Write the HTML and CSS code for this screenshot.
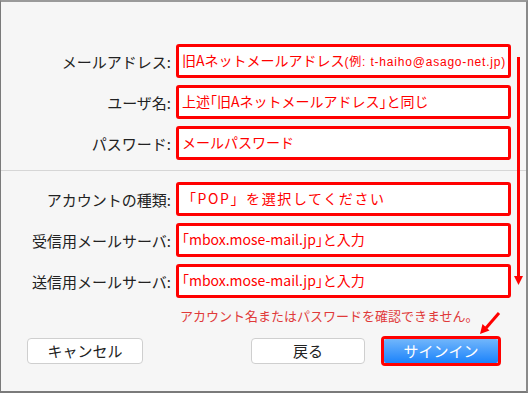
FILE: index.html
```html
<!DOCTYPE html>
<html lang="ja">
<head>
	<meta charset="UTF-8">
	<title>アカウント設定</title>
	<link rel="stylesheet" href="styles.css">
</head>
<body>
	<div class="window">
		<div class="group first">
			<div class="row">
				<div class="label">メールアドレス:</div>
				<div class="field">旧Aネットメールアドレス<span class="small">(例: t-haiho@asago-net.jp)</span></div>
			</div>
			<div class="row">
				<div class="label">ユーザ名:</div>
				<div class="field half">上述「旧Aネットメールアドレス」と同じ</div>
			</div>
			<div class="row">
				<div class="label">パスワード:</div>
				<div class="field">メールパスワード</div>
			</div>
		</div>
		<div class="sep"></div>
		<div class="group">
			<div class="row">
				<div class="label">アカウントの種類:</div>
				<div class="field wide">「POP」を選択してください</div>
			</div>
			<div class="row">
				<div class="label">受信用メールサーバ:</div>
				<div class="field half">「mbox.mose-mail.jp」と入力</div>
			</div>
			<div class="row">
				<div class="label">送信用メールサーバ:</div>
				<div class="field half">「mbox.mose-mail.jp」と入力</div>
			</div>
		</div>
		<div class="error">アカウント名またはパスワードを確認できません。</div>
		<div class="buttons">
			<div class="btn cancel">キャンセル</div>
			<div class="right">
				<div class="btn back">戻る</div>
				<div class="signin-frame"><div class="btn signin">サインイン</div></div>
			</div>
		</div>

		<!-- 赤い矢印 -->
		<svg class="arrows" width="528" height="393" viewBox="0 0 528 393">
			<line x1="518.5" y1="57" x2="518.5" y2="278" stroke="#f00" stroke-width="3"/>
			<polygon points="514,276 523,276 518.5,285" fill="#f00"/>
			<line x1="499" y1="313" x2="486" y2="328" stroke="#f00" stroke-width="3"/>
			<polygon points="480,334 489.5,330.5 482.5,324" fill="#f00"/>
		</svg>
	</div>
</body>
</html>
```

FILE: styles.css
```css
*{
	margin: 0;
	padding: 0;
	box-sizing: border-box;
}
body{
	font-family: "Noto Sans CJK JP", "Noto Sans", sans-serif;
}
.window{
	position: relative;
	width: 528px;
	height: 393px;
	background-color: #f6f6f6;
	border-top: 2px solid #9a9a9a;
	border-right: 2px solid #8a8a8a;
	border-bottom: 2px solid #7a7a7a;
	border-left: 1px solid #7a7a7a;
}
.group{
	display: flex;
	flex-direction: column;
	gap: 7px;
}
.group.first{
	padding-top: 42px;
}
.row{
	display: flex;
	align-items: center;
	gap: 5px;
	height: 34px;
}
.label{
	width: 170px;
	text-align: right;
	font-size: 15px;
	color: #222;
}
.field{
	width: 335px;
	height: 34px;
	border: 3px solid #f00;
	border-radius: 3px;
	background-color: #fff;
	padding-left: 3px;
	font-size: 14px;
	line-height: 27px;
	color: #f00;
	white-space: nowrap;
	overflow: hidden;
}
.field.half{
	font-feature-settings: "halt";
}
.field.wide{
	letter-spacing: 1.6px;
}
.small{
	font-size: 12px;
	font-family: "Liberation Sans", "Noto Sans CJK JP", sans-serif;
	letter-spacing: 0.8px;
}
.sep{
	height: 1px;
	background-color: #d6d6d6;
	margin: 10px 0 11px;
}
.error{
	margin-top: 10px;
	padding-left: 179px;
	font-size: 13px;
	line-height: 16px;
	color: #e03a3a;
}
.buttons{
	display: flex;
	justify-content: space-between;
	align-items: center;
	margin-top: 12px;
	padding: 0 25px 0 26px;
}
.right{
	display: flex;
	align-items: center;
	gap: 16px;
}
.btn{
	height: 26px;
	line-height: 24px;
	text-align: center;
	font-size: 15px;
	color: #222;
	background-color: #fff;
	border: 1px solid #cfcfcf;
	border-radius: 4px;
}
.cancel{
	width: 116px;
}
.back{
	width: 114px;
}
.signin-frame{
	border: 3px solid #f00;
	border-radius: 4px;
}
.signin{
	width: 114px;
	height: 24px;
	line-height: 24px;
	border: none;
	border-radius: 2px;
	color: #fff;
	background: linear-gradient(#71b6fb, #1c83fb);
}
.arrows{
	position: absolute;
	left: -1px;
	top: -2px;
	pointer-events: none;
}
```
